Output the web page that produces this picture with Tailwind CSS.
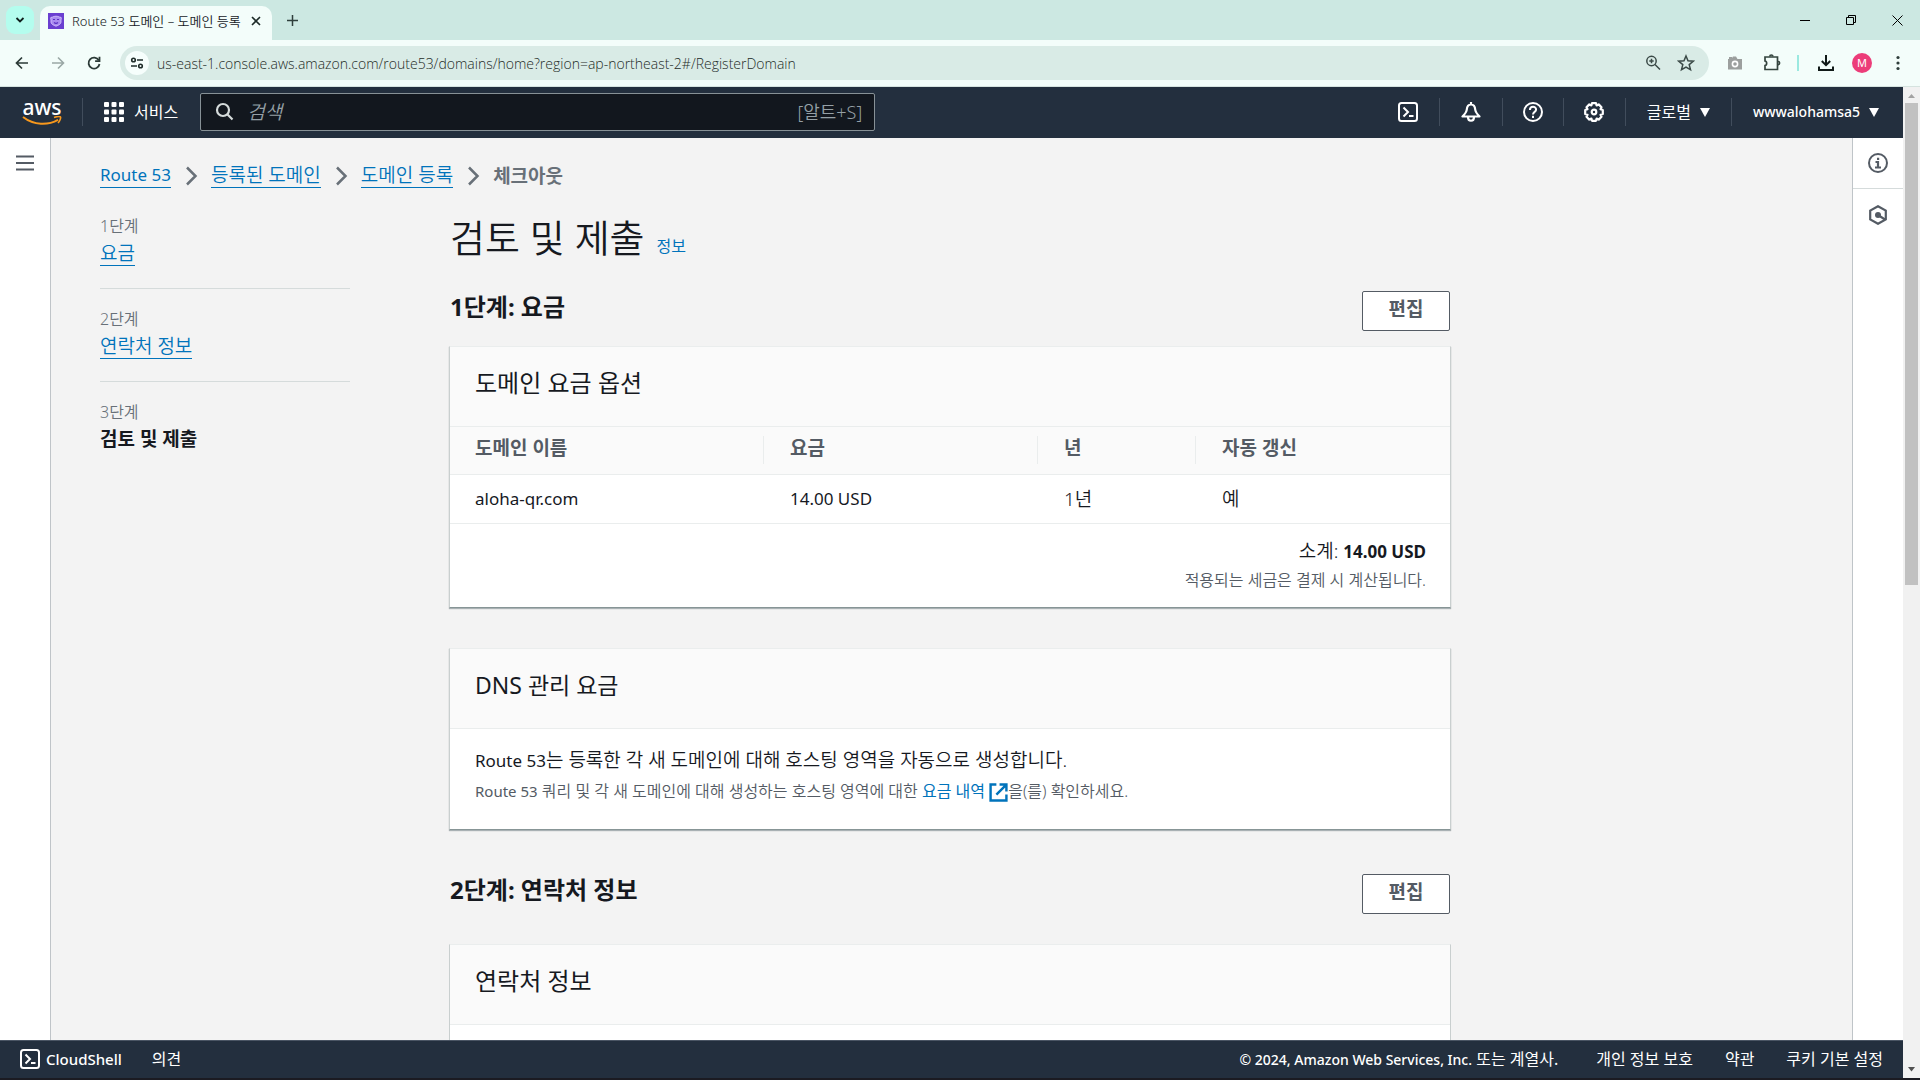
<!DOCTYPE html>
<html lang="ko">
<head>
    <meta charset="UTF-8">
    <meta name="viewport" content="width=device-width, initial-scale=1.0">
    <title>Route 53 도메인 – 도메인 등록</title>
    <script src="https://cdn.jsdelivr.net/npm/@tailwindcss/browser@4"></script>
</head>
<body class="h-screen flex flex-col overflow-hidden bg-[#f3f3f3] text-[#16191f] font-['Noto_Sans','Noto_Sans_CJK_KR',sans-serif]">

    <!-- Browser tab strip -->
    <div class="h-10 shrink-0 flex items-end bg-[#cce8e2] pl-[6px]">
        <button aria-label="탭 검색" class="size-7 mb-[6px] rounded-[9px] bg-[#b4fdee] flex items-center justify-center">
            <svg class="size-3" viewBox="0 0 12 12" fill="none" stroke="#10201d" stroke-width="1.8"><path d="M2.5 4l3.500 3.500L9.500 4" /></svg>
        </button>
        <div class="ml-[6px] w-[232px] h-[34px] rounded-t-[10px] bg-[#f3fdfa] flex items-center px-2 pb-1">
            <svg class="size-4 shrink-0" viewBox="0 0 16 16">
                <rect width="16" height="16" fill="#6a3fd0" />
                <path d="M3 4.200c1.300.6 2-1 5-1s3.700 1.600 5 1c.9 1.300-.3 2.300 0 3.800.4 3-2 4-5 5.200C5 12 2.600 11 3 8c.3-1.500-.9-2.500 0-3.800z" fill="#a98bf0" stroke="#dccbff" stroke-width=".8" />
                <path d="M5 6.500h2M9 6.500h2M6 9.500c1 .8 3 .8 4 0" fill="none" stroke="#5a30c0" stroke-width="1.200" />
            </svg>
            <span class="ml-2 text-[13px] leading-5 whitespace-nowrap flex-1 font-[350]">Route 53 도메인 – 도메인 등록</span>
            <button aria-label="탭 닫기" class="size-4 flex items-center justify-center">
                <svg class="size-[10px]" viewBox="0 0 10 10" stroke="#1c2b28" stroke-width="1.600"><path d="M1 1l8 8M9 1L1 9" /></svg>
            </button>
        </div>
        <button aria-label="새 탭" class="ml-[10px] mb-[10px] size-5 flex items-center justify-center">
            <svg class="size-[11px]" viewBox="0 0 11 11" stroke="#2f3f3c" stroke-width="1.500"><path d="M5.500 0v11M0 5.500h11" /></svg>
        </button>
        <div class="ml-auto h-full flex items-center">
            <button aria-label="최소화" class="w-[46px] flex justify-center"><svg class="size-[10px]" viewBox="0 0 10 10" stroke="#000"><path d="M0 5.500h10" /></svg></button>
            <button aria-label="이전 크기로" class="w-[46px] flex justify-center"><svg class="size-[10px]" viewBox="0 0 10 10" fill="none" stroke="#000"><path d="M.5 2.500h7v7h-7zM2.500 2.500v-2h7v7h-2" /></svg></button>
            <button aria-label="닫기" class="w-[46px] flex justify-center"><svg class="size-[11px]" viewBox="0 0 11 11" stroke="#000"><path d="M.5.5l10 10M10.500.5l-10 10" /></svg></button>
        </div>
    </div>

    <!-- Browser toolbar -->
    <div class="h-[47px] shrink-0 flex items-center bg-[#f3fdfa] border-b border-[#d5e3df] pl-3 pr-5">
        <button aria-label="뒤로" class="size-5"><svg viewBox="0 0 20 20" fill="none" stroke="#2b3a37" stroke-width="1.700"><path d="M16 10H5M10 4.500L4.500 10l5.500 5.500" /></svg></button>
        <button aria-label="앞으로" class="size-5 ml-4"><svg viewBox="0 0 20 20" fill="none" stroke="#9aa8a5" stroke-width="1.600"><path d="M4 10h11M10 4.500l5.500 5.500-5.500 5.500" /></svg></button>
        <button aria-label="새로고침" class="size-5 ml-4"><svg viewBox="0 0 20 20" fill="none" stroke="#2b3a37" stroke-width="1.800"><path d="M14.800 7.200A5.500 5.500 0 1 0 15.500 11" /><path d="M15.500 3.800v4.400h-4.400" /></svg></button>
        <div class="ml-4 flex-1 h-[34px] rounded-full bg-[#d9ebe6] flex items-center pl-[5px] pr-[14px]">
            <button aria-label="사이트 정보" class="size-6 rounded-full bg-[#f6fefc] flex items-center justify-center">
                <svg class="size-[14px]" viewBox="0 0 14 14" fill="none" stroke="#1f2d2a" stroke-width="1.600"><circle cx="3.500" cy="4" r="1.800" /><path d="M7 4h6M1 10h6" /><circle cx="10.500" cy="10" r="1.800" /></svg>
            </button>
            <input type="text" aria-label="주소창" class="ml-2 flex-1 font-['Open_Sans',sans-serif] font-light text-[14px] text-[#1f2b28] outline-none" value="us-east-1.console.aws.amazon.com/route53/domains/home?region=ap-northeast-2#/RegisterDomain">
            <svg class="size-4" viewBox="0 0 16 16" fill="none" stroke="#3b4a47" stroke-width="1.500"><circle cx="6.500" cy="6" r="4.700" /><path d="M10 9.500l5 5M4.300 6h4.400M6.500 3.800v4.400" /></svg>
            <svg class="size-[18px] ml-4" viewBox="0 0 18 18" fill="none" stroke="#3b4a47" stroke-width="1.500"><path d="M9 2l2 4.800 5.200.4-4 3.400 1.300 5.100L9 13l-4.500 2.700 1.300-5.100-4-3.400 5.200-.4z" /></svg>
        </div>
        <svg class="size-4 ml-[18px]" viewBox="0 0 16 16"><path d="M1 4h1V2h3v1l1-1.500h3L10.500 4H15v10.500H1z" fill="#9c9f9e" /><circle cx="8" cy="9" r="3.400" fill="#fff" /><circle cx="8" cy="9" r="1.800" fill="#9c9f9e" /></svg>
        <svg class="size-[18px] ml-5" viewBox="0 0 18 18" fill="none" stroke="#35453f" stroke-width="1.700"><path d="M2 3h12.500v12.500H2v-4c2.200-.2 2.200-4.300 0-4.500z" /><path d="M6.800 2.500a1.500 1.500 0 0 1 3 0M15 7.500a1.500 1.500 0 0 1 0 3.200" /></svg>
        <div class="w-[2px] h-4 ml-4 bg-[#9be9e0]"></div>
        <svg class="size-[18px] ml-[18px]" viewBox="0 0 18 18" fill="none" stroke="#111a18" stroke-width="2"><path d="M9 1v10M4.800 7L9 11.200 13.200 7M2 12.500V16h14v-3.500" /></svg>
        <div class="size-5 ml-[17px] rounded-full bg-[#ec3d79] text-white text-[11px] leading-5 text-center">M</div>
        <svg class="w-1 h-4 ml-6" viewBox="0 0 4 16" fill="#2f3e3b"><circle cx="2" cy="2.500" r="1.600" /><circle cx="2" cy="8" r="1.600" /><circle cx="2" cy="13.500" r="1.600" /></svg>
    </div>

    <div class="flex-1 min-h-0 flex">
        <div class="flex-1 min-w-0 flex flex-col">

            <!-- AWS header -->
            <header class="h-[51px] shrink-0 bg-[#232f3e] text-white flex items-center pr-6 pb-px">
                <a href="#" aria-label="aws" class="ml-[22px] w-10 flex flex-col items-center">
                    <span class="text-[21px] leading-[18px] font-medium">aws</span>
                    <svg class="w-10 h-[10px]" viewBox="0 0 40 10" fill="none" stroke="#f7981d"><path d="M1 1c11 8.500 25 8.500 35 2.800" stroke-width="2" /><path d="M32 1.500c3-1 6-1.200 6.500-.5s-.5 4-2.500 6" stroke-width="1.600" /></svg>
                </a>
                <div class="w-px h-7 ml-5 bg-[#414d5c]"></div>
                <button class="ml-[21px] flex items-center">
                    <svg class="size-5" viewBox="0 0 20 20" fill="#fff"><rect width="5" height="5" rx="1" /><rect x="7.500" width="5" height="5" rx="1" /><rect x="15" width="5" height="5" rx="1" /><rect y="7.500" width="5" height="5" rx="1" /><rect x="7.500" y="7.500" width="5" height="5" rx="1" /><rect x="15" y="7.500" width="5" height="5" rx="1" /><rect y="15" width="5" height="5" rx="1" /><rect x="7.500" y="15" width="5" height="5" rx="1" /><rect x="15" y="15" width="5" height="5" rx="1" /></svg>
                    <span class="ml-[10px] text-[16px] leading-6">서비스</span>
                </button>
                <label class="ml-[22px] w-[675px] h-[38px] border border-[#879196] rounded-[2px] bg-[#12171e] flex items-center px-3">
                    <svg class="size-5 ml-[2px]" viewBox="0 0 20 20" fill="none" stroke="#d5dbdb" stroke-width="2.200"><circle cx="8" cy="8" r="6" /><path d="M12.300 12.300L17.500 17.500" /></svg>
                    <input type="text" placeholder="검색" aria-label="검색" class="ml-3 flex-1 text-[19px] leading-6 italic font-[350] outline-none placeholder:text-[#95a0a6]">
                    <span class="text-[18px] leading-6 font-[350] text-[#95a0a6]">[알트+S]</span>
                </label>
                <nav class="ml-auto flex items-center text-[16px] leading-6">
                    <button aria-label="CloudShell" class="w-[62px] flex justify-center"><svg class="size-5" viewBox="0 0 20 20" fill="none" stroke="#fff" stroke-width="2"><rect x="1" y="1" width="18" height="18" rx="2.500" /><path d="M5.500 5.500L10 10l-4.500 4.500M11 14h4.500" /></svg></button>
                    <div class="w-px h-7 bg-[#414d5c]"></div>
                    <button aria-label="알림" class="w-[62px] flex justify-center"><svg class="size-5" viewBox="0 0 20 20" fill="none" stroke="#fff" stroke-width="2.200" stroke-linejoin="round"><path d="M10 2.500C6.800 2.500 6 4.500 5.800 7.500 5.500 10.500 4 12 1.500 14.500h17C16 12 14.500 10.500 14.200 7.500 14 4.500 13.200 2.500 10 2.500zM10 0v3" /><path d="M7 15c0 5 6 5 6 0" /></svg></button>
                    <div class="w-px h-7 bg-[#414d5c]"></div>
                    <button aria-label="도움말" class="w-[60px] flex justify-center"><svg class="size-5" viewBox="0 0 20 20" fill="none" stroke="#fff" stroke-width="2"><circle cx="10" cy="10" r="9" /><path d="M6.900 8c0-4.200 6.200-4.200 6.200-.5 0 2.500-3.100 2.200-3.100 5M10 13.800v2.200" /></svg></button>
                    <div class="w-px h-7 bg-[#414d5c]"></div>
                    <button aria-label="설정" class="w-[61px] flex justify-center"><svg class="size-5" viewBox="0 0 20 20" fill="none" stroke="#fff" stroke-width="2.200" stroke-linejoin="round"><path d="M8 1.200h4l.6 2.200 2.100-1 2.800 2.800-1 2.100 2.300.7v4l-2.300.7 1 2.100-2.800 2.800-2.100-1-.6 2.200H8l-.6-2.200-2.100 1-2.800-2.800 1-2.100L1.200 12V8l2.300-.7-1-2.100 2.800-2.800 2.100 1z" /><circle cx="10" cy="10" r="2.300" /></svg></button>
                    <div class="w-px h-7 bg-[#414d5c]"></div>
                    <button class="px-[21px] flex items-center">글로벌<svg class="w-[10px] h-[9px] ml-[9px]" viewBox="0 0 10 9" fill="#fff"><path d="M0 0h10L5 9z" /></svg></button>
                    <div class="w-px h-7 bg-[#414d5c]"></div>
                    <button class="pl-[21px] flex items-center text-[14px] font-medium">wwwalohamsa5<svg class="w-[10px] h-[9px] ml-[9px]" viewBox="0 0 10 9" fill="#fff"><path d="M0 0h10L5 9z" /></svg></button>
                </nav>
            </header>

            <div class="flex-1 min-h-0 flex">
                <!-- Left rail -->
                <aside class="w-[51px] shrink-0 bg-white border-r border-[#bfc4c8] flex flex-col items-center pt-4">
                    <button aria-label="메뉴 열기" class="size-[18px]"><svg viewBox="0 0 18 18" stroke="#545b64" stroke-width="2"><path d="M0 2.500h18M0 9h18M0 15.500h18" /></svg></button>
                </aside>

                <main class="flex-1 min-w-0 overflow-hidden pl-[49px] pt-[25px]">
                    <nav aria-label="이동 경로" class="flex items-center text-[19px] leading-6 font-[350] text-[#0073bb]">
                        <a href="#" class="border-b border-[#0073bb] text-[17px] font-normal">Route 53</a>
                        <svg class="w-10 h-5" viewBox="0 0 40 20" fill="none" stroke="#687078" stroke-width="2.500"><path d="M16 1.500l8.500 8.500-8.500 8.500" /></svg>
                        <a href="#" class="border-b border-[#0073bb]">등록된 도메인</a>
                        <svg class="w-10 h-5" viewBox="0 0 40 20" fill="none" stroke="#687078" stroke-width="2.500"><path d="M16 1.500l8.500 8.500-8.500 8.500" /></svg>
                        <a href="#" class="border-b border-[#0073bb]">도메인 등록</a>
                        <svg class="w-10 h-5" viewBox="0 0 40 20" fill="none" stroke="#687078" stroke-width="2.500"><path d="M16 1.500l8.500 8.500-8.500 8.500" /></svg>
                        <span class="font-bold text-[#687078]">체크아웃</span>
                    </nav>

                    <div class="mt-7 flex items-start gap-[99px]">
                        <!-- Wizard steps -->
                        <ol class="w-[250px] shrink-0 text-[19px] leading-6 font-[350]">
                            <li class="border-b border-[#d5dbdb] pb-[22px]">
                                <div class="text-[16px] leading-5 mb-[5px] text-[#687078]">1단계</div>
                                <a href="#" class="inline-block border-b border-[#0073bb] text-[#0073bb]">요금</a>
                            </li>
                            <li class="border-b border-[#d5dbdb] pt-5 pb-[22px]">
                                <div class="text-[16px] leading-5 mb-[5px] text-[#687078]">2단계</div>
                                <a href="#" class="inline-block border-b border-[#0073bb] text-[#0073bb]">연락처 정보</a>
                            </li>
                            <li class="pt-5">
                                <div class="text-[16px] leading-5 mb-[5px] text-[#687078]">3단계</div>
                                <span class="font-bold">검토 및 제출</span>
                            </li>
                        </ol>

                        <div class="flex-1 max-w-[1002px]">
                            <div class="flex items-baseline gap-3 pl-px">
                                <h1 class="text-[38px] leading-[42px] font-[350]">검토 및 제출</h1>
                                <a href="#" class="text-[16px] text-[#0073bb]">정보</a>
                            </div>

                            <!-- Step 1 -->
                            <div class="mt-[33px] mb-[15px] px-px flex items-start justify-between">
                                <h2 class="text-[24px] leading-8 font-bold">1단계: 요금</h2>
                                <button class="w-[88px] h-10 border border-[#545b64] rounded-[2px] bg-white pb-1 text-[19px] leading-6 font-bold text-[#545b64]">편집</button>
                            </div>
                            <section class="bg-white border-x border-t border-x-[#c9cfcf] border-t-[#eaeded] border-b border-b-[#879596] shadow-[0_1px_1px_rgba(0,28,36,0.3)]">
                                <h3 class="h-20 px-[25px] pt-5 bg-[#fafafa] border-b border-[#eaeded] text-[24px] leading-8">도메인 요금 옵션</h3>
                                <table class="w-full table-fixed text-left text-[19px] leading-6">
                                    <thead class="bg-[#fafafa] text-[#545b64]">
                                        <tr class="h-[47px] border-b border-[#eaeded]">
                                            <th class="w-[313px] pl-[25px] pb-1 font-bold">도메인 이름</th>
                                            <th class="w-[274px]"><div class="border-l border-[#eaeded] pl-[26px] pb-1 font-bold">요금</div></th>
                                            <th class="w-[158px]"><div class="border-l border-[#eaeded] pl-[26px] pb-1 font-bold">년</div></th>
                                            <th><div class="border-l border-[#eaeded] pl-[26px] pb-1 font-bold">자동 갱신</div></th>
                                        </tr>
                                    </thead>
                                    <tbody>
                                        <tr class="h-[49px] border-b border-[#eaeded]">
                                            <td class="pl-[25px] text-[17px]">aloha-qr.com</td>
                                            <td class="pl-[27px] text-[17px]">14.00 USD</td>
                                            <td class="pl-[27px] font-[350]">1년</td>
                                            <td class="pl-[27px] font-[350]">예</td>
                                        </tr>
                                    </tbody>
                                </table>
                                <div class="px-6 py-[15px] text-right font-[350]">
                                    <p class="text-[19px] leading-6">소계: <b class="text-[17px] font-bold">14.00 USD</b></p>
                                    <p class="mt-1 text-[16px] leading-6 text-[#545b64]">적용되는 세금은 결제 시 계산됩니다.</p>
                                </div>
                            </section>

                            <section class="mt-10 bg-white border-x border-t border-x-[#c9cfcf] border-t-[#eaeded] border-b border-b-[#879596] shadow-[0_1px_1px_rgba(0,28,36,0.3)]">
                                <h3 class="h-20 px-[25px] pt-5 bg-[#fafafa] border-b border-[#eaeded] text-[23px] leading-8">DNS 관리 요금</h3>
                                <div class="px-[25px] pt-[19px] pb-[26px] font-[350]">
                                    <p class="text-[19px] leading-6"><span class="text-[17px] font-normal">Route 53</span>는 등록한 각 새 도메인에 대해 호스팅 영역을 자동으로 생성합니다.</p>
                                    <p class="mt-[6px] text-[16px] leading-6 text-[#545b64]"><span class="text-[15px] font-normal">Route 53</span> 쿼리 및 각 새 도메인에 대해 생성하는 호스팅 영역에 대한 <a href="#" class="font-normal text-[#0073bb]">요금 내역 <svg class="inline size-[19px]" viewBox="0 0 18 18" fill="none" stroke="#0073bb" stroke-width="2.300"><path d="M7 1.500H1.500v15h15V11M10 1.500h6.500V8M16 2L7 11" /></svg></a>을(를) 확인하세요.</p>
                                </div>
                            </section>

                            <!-- Step 2 -->
                            <div class="mt-11 mb-[30px] px-px flex items-start justify-between">
                                <h2 class="text-[24px] leading-8 font-bold">2단계: 연락처 정보</h2>
                                <button class="w-[88px] h-10 border border-[#545b64] rounded-[2px] bg-white pb-1 text-[19px] leading-6 font-bold text-[#545b64]">편집</button>
                            </div>
                            <section class="h-60 bg-white border-x border-t border-x-[#c9cfcf] border-t-[#eaeded]">
                                <h3 class="h-20 px-[25px] pt-5 bg-[#fafafa] border-b border-[#eaeded] text-[24px] leading-8">연락처 정보</h3>
                            </section>
                        </div>
                    </div>
                </main>

                <!-- Right rail -->
                <aside class="w-[51px] shrink-0 bg-white border-l border-[#bfc4c8] flex flex-col items-center">
                    <button aria-label="정보 패널" class="w-full h-[51px] border-b border-[#d5dbdb] flex items-center justify-center"><svg class="size-5" viewBox="0 0 20 20" fill="none" stroke="#545b64" stroke-width="2"><circle cx="10" cy="10" r="9" /><path d="M7.500 9H10v5M7 14.500h6M9 5.800h2.200" stroke-width="2.200" /></svg></button>
                    <button aria-label="자습서" class="w-full h-[51px] flex items-center justify-center"><svg class="size-5" viewBox="0 0 20 20" fill="none" stroke="#545b64" stroke-width="2.200"><path d="M10 1.200l7.800 4.400v8.800L10 18.800l-7.800-4.400V5.600z" /><circle cx="10" cy="10" r="3" fill="#545b64" stroke="none" /><path d="M10 10l7 4.500" /></svg></button>
                </aside>
            </div>

            <!-- AWS footer -->
            <footer class="h-[38px] shrink-0 bg-[#232f3e] border-t border-[#4a5564] text-white text-[16px] leading-6 flex items-center px-5 pb-px">
                <button class="flex items-center text-[15px] font-medium">
                    <svg class="size-5 mr-[6px]" viewBox="0 0 20 20" fill="none" stroke="#fff" stroke-width="2"><rect x="1" y="1" width="18" height="18" rx="2.500" /><path d="M5.500 5.500L10 10l-4.500 4.500M11 14h4.500" /></svg>
                    CloudShell
                </button>
                <a href="#" class="ml-[30px]">의견</a>
                <span class="ml-auto"><span class="text-[14px] font-medium">© 2024, Amazon Web Services, Inc.</span> 또는 계열사.</span>
                <a href="#" class="ml-[38px]">개인 정보 보호</a>
                <a href="#" class="ml-8">약관</a>
                <a href="#" class="ml-8">쿠키 기본 설정</a>
            </footer>
        </div>

        <!-- Page scrollbar -->
        <div class="w-[17px] shrink-0 bg-[#f1f1f1] flex flex-col items-center">
            <svg class="w-[7px] h-4" viewBox="0 0 7 16" fill="#a3a3a3"><path d="M0 11h7L3.500 7z" /></svg>
            <div class="w-[13px] h-[482px] bg-[#c1c1c1]"></div>
            <svg class="w-[7px] h-4 mt-auto" viewBox="0 0 7 16" fill="#505050"><path d="M0 5h7L3.500 9.500z" /></svg>
        </div>
    </div>
    <div class="h-[2px] shrink-0 bg-[#1b1b22]"></div>
</body>
</html>
